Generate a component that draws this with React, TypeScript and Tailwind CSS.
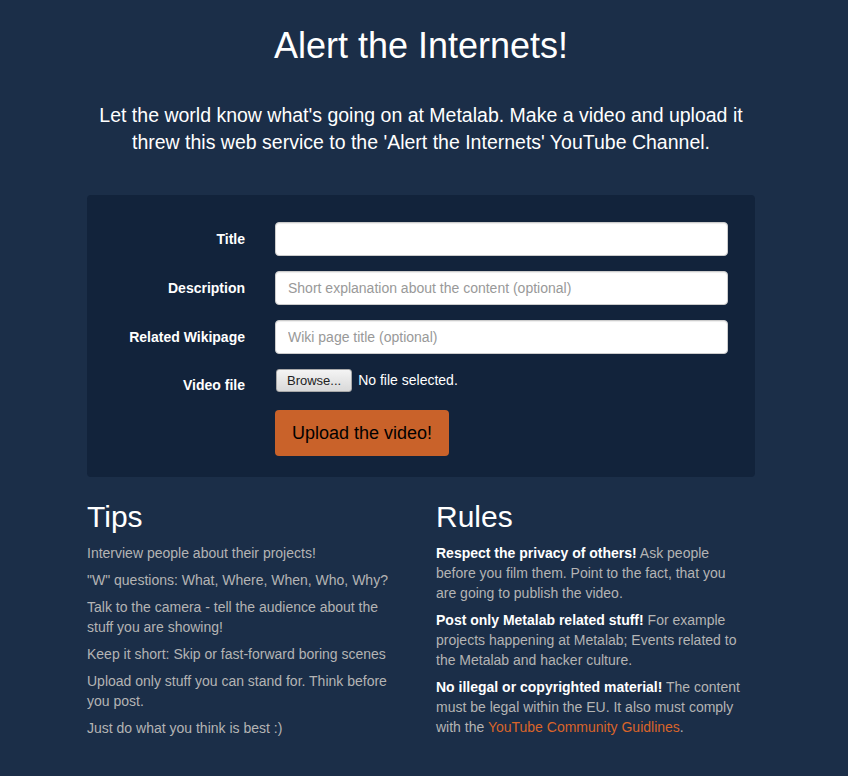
import React from 'react';

const inputCls =
  'w-full h-[34px] px-3 bg-white border border-[#ccc] rounded-[4px] text-[14px] text-[#333] outline-none placeholder:text-[#999] shadow-[inset_0_1px_1px_rgba(0,0,0,0.075)]';

const FormRow = ({ label, children }: { label: string; children: React.ReactNode }) => (
  <div className="flex items-center">
    <label className="w-[158px] text-right text-[14px] font-bold text-white">{label}</label>
    <div className="flex-1 pl-[30px]">{children}</div>
  </div>
);

export default function App() {
  const tips = [
    'Interview people about their projects!',
    '"W" questions: What, Where, When, Who, Why?',
    'Talk to the camera - tell the audience about the stuff you are showing!',
    'Keep it short: Skip or fast-forward boring scenes',
    'Upload only stuff you can stand for. Think before you post.',
    'Just do what you think is best :)',
  ];

  return (
    <div className="min-h-[776px] w-full bg-[#1b2e48] text-[#b4b4b4]" style={{ fontFamily: '"Liberation Sans", Arial, sans-serif' }}>
      <div className="w-[668px] ml-[87px] pt-[24px]">
        <h1 className="text-center text-white text-[36px] leading-[44px]">Alert the Internets!</h1>
        <p className="mt-[34px] text-center text-white text-[19.5px] leading-[27px] px-[10px]">
          Let the world know what's going on at Metalab. Make a video and upload it threw this web service to the 'Alert
          the Internets' YouTube Channel.
        </p>

        <form className="mt-[39px] bg-[#12233b] rounded-[4px] pr-[27px] pt-[27px] pb-[21px] flex flex-col gap-[15px]" onSubmit={(e) => e.preventDefault()}>
          <FormRow label="Title">
            <input className={inputCls} />
          </FormRow>
          <FormRow label="Description">
            <input className={inputCls} placeholder="Short explanation about the content (optional)" />
          </FormRow>
          <FormRow label="Related Wikipage">
            <input className={inputCls} placeholder="Wiki page title (optional)" />
          </FormRow>
          <div className="flex items-start h-[26px]">
            <label className="w-[158px] text-right text-[14px] leading-[20px] font-bold text-white pt-[6px]">Video file</label>
            <div className="flex-1 pl-[31px] flex items-center gap-[6px]">
              <button type="button" className="h-[23px] px-[10px] text-[13px] text-[#222] bg-gradient-to-b from-[#f4f4f4] to-[#d9d9d9] border border-[#a8a8a8] rounded-[3px] leading-none">
                Browse...
              </button>
              <span className="text-white text-[14px]">No file selected.</span>
            </div>
          </div>
          <div className="flex pl-[188px]">
            <button type="submit" className="h-[46px] px-[17px] bg-[#c9622a] text-black text-[18px] rounded-[4px]">
              Upload the video!
            </button>
          </div>
        </form>

        <div className="mt-[20px] grid grid-cols-[315px_306px] gap-x-[34px]">
          <div>
            <h2 className="text-white text-[30px] leading-[40px] mb-[6px]">Tips</h2>
            <div className="flex flex-col gap-[7px] text-[14px] leading-[20px]">
              {tips.map((t) => (
                <p key={t}>{t}</p>
              ))}
            </div>
          </div>
          <div>
            <h2 className="text-white text-[30px] leading-[40px] mb-[6px]">Rules</h2>
            <div className="flex flex-col gap-[7px] text-[14px] leading-[20px]">
              <p>
                <b className="text-white">Respect the privacy of others!</b> Ask people before you film them. Point to the fact,
                that you are going to publish the video.
              </p>
              <p>
                <b className="text-white">Post only Metalab related stuff!</b> For example projects happening at Metalab; Events
                related to the Metalab and hacker culture.
              </p>
              <p>
                <b className="text-white">No illegal or copyrighted material!</b> The content must be legal within the EU. It
                also must comply with the{' '}
                <a href="#" className="text-[#d9642a]">
                  YouTube Community Guidlines
                </a>
                .
              </p>
            </div>
          </div>
        </div>
      </div>
    </div>
  );
}
